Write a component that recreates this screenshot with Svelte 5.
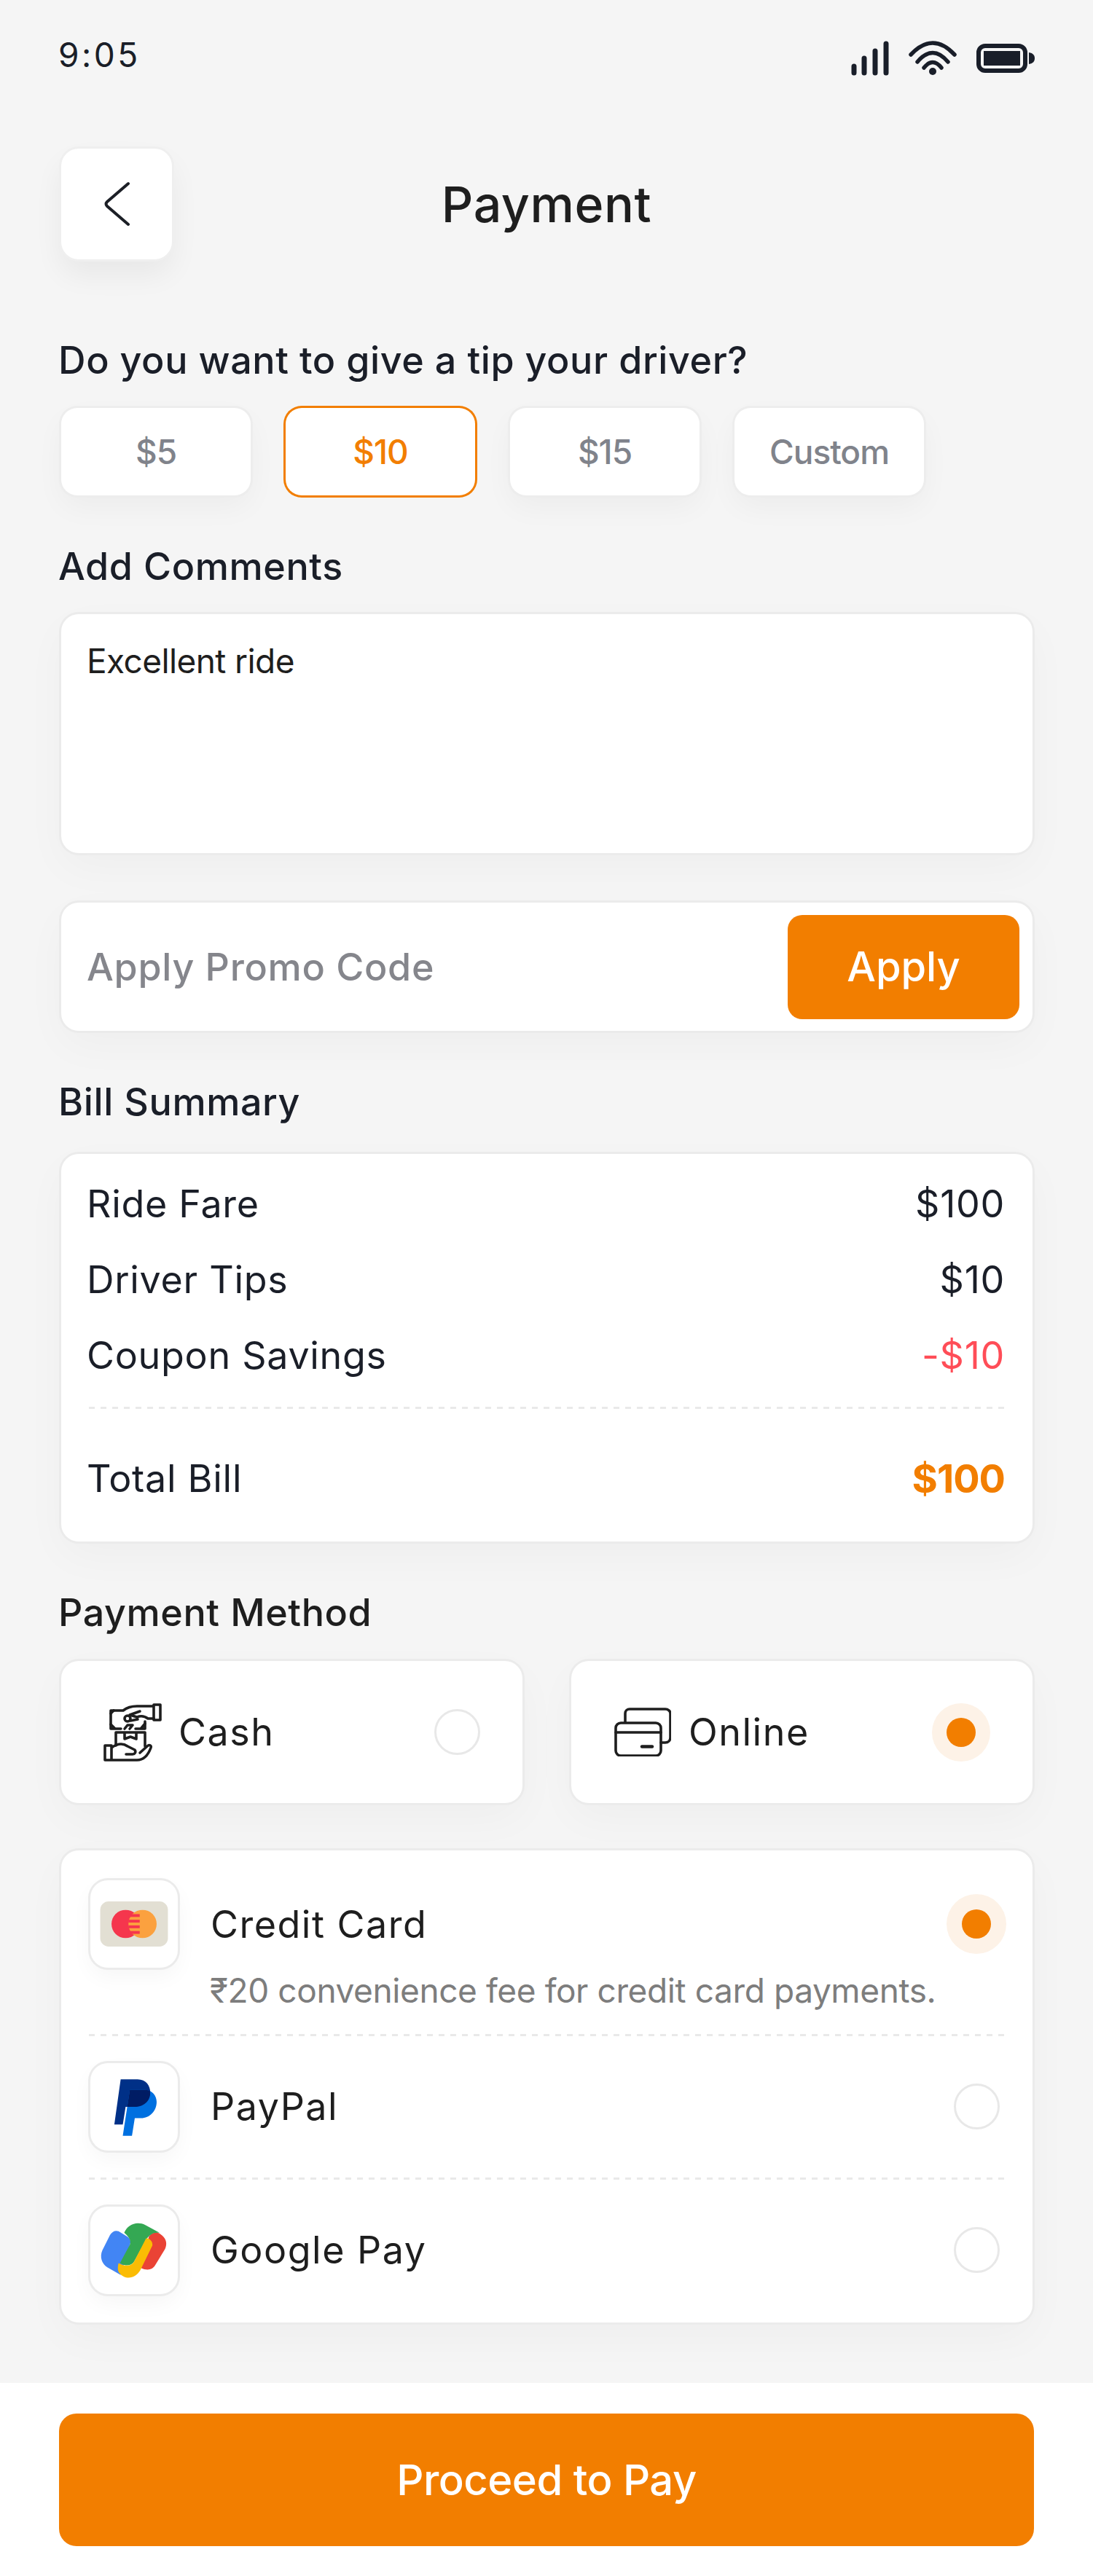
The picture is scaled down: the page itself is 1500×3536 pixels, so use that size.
<script>
  const tips = ['$5', '$10', '$15', 'Custom'];
  const bill = [
    { label: 'Ride Fare', value: '$100' },
    { label: 'Driver Tips', value: '$10' },
    { label: 'Coupon Savings', value: '-$10', negative: true }
  ];
</script>

<div class="screen">
  <div class="content">
    <div class="status">
      <span class="time">9:05</span>
      <svg class="status-icons" viewBox="1160 50 265 60" width="265" height="60" aria-hidden="true">
        <g stroke="#191e29" stroke-linecap="round" fill="none">
          <path stroke-width="7" d="M1172 91V100M1186 80V100M1201 70V100M1216 60V100" />
          <path stroke-width="5.5" d="M1250 75Q1280 43 1310 75M1259 85Q1280 60 1301 85M1268 93Q1280 78 1292 93" />
        </g>
        <circle cx="1280" cy="98" r="5" fill="#191e29" />
        <rect x="1343" y="63" width="64" height="34" rx="9" fill="none" stroke="#191e29" stroke-width="6" />
        <rect x="1350" y="70" width="50" height="20" fill="#191e29" />
        <path d="M1412 72C1418 73 1420 76 1420 80S1418 87 1412 88Z" fill="#191e29" />
      </svg>
    </div>

    <header class="topbar">
      <button class="back" aria-label="Back">
        <svg viewBox="0 0 40 64" width="40" height="64" aria-hidden="true">
          <path d="M36 4L7 29Q4 32 7 35L36 60" fill="none" stroke="#1c1f26" stroke-width="4" stroke-linecap="round" />
        </svg>
      </button>
      <h1>Payment</h1>
    </header>

    <h2 class="h-tip">Do you want to give a tip your driver?</h2>
    <div class="tips">
      {#each tips as t, i}
        <div class="tip" class:active={i === 1}>{t}</div>
      {/each}
    </div>

    <h2 class="h-comments">Add Comments</h2>
    <div class="card comment">Excellent ride</div>

    <div class="card promo">
      <span>Apply Promo Code</span>
      <button class="apply">Apply</button>
    </div>

    <h2 class="h-bill">Bill Summary</h2>
    <div class="card bill">
      {#each bill as row}
        <div class="bill-row">
          <span>{row.label}</span>
          <span class:neg={row.negative}>{row.value}</span>
        </div>
      {/each}
      <div class="dash bill-dash"></div>
      <div class="bill-row total">
        <span>Total Bill</span>
        <b>$100</b>
      </div>
    </div>

    <h2 class="h-method">Payment Method</h2>
    <div class="modes">
      <div class="card mode">
        <svg class="ic-cash" viewBox="0 0 80 80" width="80" height="80" aria-hidden="true">
          <g fill="none" stroke="#1e1e1e" stroke-width="3.6" stroke-linejoin="round" stroke-linecap="round">
            <path d="M69 2H78V23H69ZM69 4H46C38 4 32 6 27 10H10V35H24M44 35H57V25" />
            <path d="M69 21H61C57 18 51 17 46 19L36 16L50 11M10 14L14 10M10 29L15 34M52 34L57 28M37 24L47 22M29 35L33 30L40 30L36 35" />
            <circle cx="33" cy="21" r="4" />
            <path d="M17 58V40H57V59M29 40V49L37 46L45 49V40" />
            <path d="M2 58H11V78H2ZM11 61C18 56 26 54 33 59L43 64C45 67 43 70 40 70H31M11 78H46C54 78 61 72 65 61C66 58 63 56 60 59L50 68" />
          </g>
        </svg>
        <span class="mode-label">Cash</span>
        <span class="radio"></span>
      </div>
      <div class="card mode">
        <svg class="ic-online" viewBox="0 0 78 67" width="78" height="67" aria-hidden="true">
          <g fill="none" stroke="#1e1e1e" stroke-width="3.6" stroke-linecap="round">
            <path d="M15 20V8C15 4 18 2 21 2H70C74 2 77 5 77 8V41C77 45 74 48 70 48H64" />
            <rect x="2" y="21" width="62" height="45" rx="7" />
            <path d="M2 34H64" />
            <path d="M38 53.500H52" stroke-width="4.500" />
          </g>
        </svg>
        <span class="mode-label">Online</span>
        <span class="radio-on big"><i></i></span>
      </div>
    </div>

    <div class="card methods">
      <div class="method first">
        <div class="tile">
          <svg viewBox="0 0 124 124" width="120" height="120" aria-hidden="true">
            <rect x="14" y="30" width="96" height="64" rx="12" fill="#e2dfd3" />
            <circle cx="50" cy="62" r="20" fill="#f5364d" />
            <circle cx="74" cy="62" r="20" fill="#fba13f" />
            <g fill="#f5364d">
              <rect x="54" y="48" width="16" height="4" />
              <rect x="54" y="56" width="16" height="4" />
              <rect x="54" y="64" width="16" height="4" />
              <rect x="54" y="72" width="16" height="4" />
            </g>
          </svg>
        </div>
        <div class="method-main">
          <div class="method-line">
            <span>Credit Card</span>
            <span class="radio-on"><i></i></span>
          </div>
        </div>
      </div>
      <div class="note">₹20 convenience fee for credit card payments.</div>
      <div class="dash"></div>
      <div class="method">
        <div class="tile">
          <svg viewBox="0 0 124 124" width="120" height="120" aria-hidden="true">
            <defs>
              <clipPath id="pp-dark">
                <path d="M43 23H67C79 23 85 32 85 42C85 54 75 62 63 62H50L46 87H34Z" />
              </clipPath>
            </defs>
            <path d="M43 23H67C79 23 85 32 85 42C85 54 75 62 63 62H50L46 87H34Z" fill="#003087" />
            <path d="M56 38H78C88 38 94 47 94 55C94 68 84 78 72 78H63L59 103H46Z" fill="#0070e0" />
            <path d="M56 38H78C88 38 94 47 94 55C94 68 84 78 72 78H63L59 103H46Z" fill="#001c64" clip-path="url(#pp-dark)" />
          </svg>
        </div>
        <div class="method-line fill">
          <span>PayPal</span>
          <span class="radio"></span>
        </div>
      </div>
      <div class="dash"></div>
      <div class="method">
        <div class="tile">
          <svg viewBox="0 0 124 124" width="120" height="120" aria-hidden="true">
            <path d="M28 40C31 35 36 33 40 35L53 43C57 46 58 50 56 54L43 97L24 86C16 81 13 71 17 62Z" fill="#4285f4" />
            <path d="M83 42C87 37 93 35 98 38L102 41C108 46 109 53 106 60L92 83C88 90 80 91 72 87Z" fill="#ea4335" />
            <path d="M48 37C53 25 66 20 78 26L98 37C90 36 84 39 79 47L62 78C58 84 50 85 42 80L56 54C58 49 56 44 48 37Z" fill="#34a853" />
            <path d="M79 45C83 44 89 49 88 55L71 90C64 102 50 105 41 94C38 90 39 84 40 80C47 84 57 86 62 78Z" fill="#fbbc04" />
          </svg>
        </div>
        <div class="method-line fill">
          <span>Google Pay</span>
          <span class="radio"></span>
        </div>
      </div>
    </div>
  </div>

  <footer class="footer">
    <button class="proceed">Proceed to Pay</button>
  </footer>
</div>

<style>
  :global(body) {
    margin: 0;
    background: #f5f5f5;
  }
  .screen {
    width: 1500px;
    height: 3536px;
    display: flex;
    flex-direction: column;
    background: #f5f5f5;
    color: #1a1e28;
    font-family: "Inter", "Noto Sans", sans-serif;
    overflow: hidden;
  }
  .content {
    flex: 1;
    padding: 0 82px;
    display: flex;
    flex-direction: column;
  }
  .status {
    height: 124px;
    display: flex;
    justify-content: space-between;
    align-items: flex-start;
    margin-right: -7px;
  }
  .time {
    font-size: 46px;
    font-weight: 400;
    letter-spacing: 3.5px;
    line-height: 56px;
    margin-top: 47px;
    margin-left: -2px;
  }
  .status-icons {
    margin-top: 50px;
  }
  .topbar {
    margin-top: 80px;
    height: 152px;
    position: relative;
    display: flex;
    align-items: center;
    justify-content: center;
  }
  .back {
    position: absolute;
    left: 0;
    top: 0;
    margin-left: 2px;
    width: 152px;
    height: 152px;
    padding: 0;
    border: 0;
    border-radius: 24px;
    background: #fff;
    box-shadow: 0 0 0 3px #efefef, 0 20px 40px rgba(0, 0, 0, 0.06);
    display: flex;
    align-items: center;
    justify-content: center;
  }
  h1 {
    margin: 0;
    font-size: 68px;
    font-weight: 500;
    color: #1e1e1e;
    letter-spacing: 0.6px;
  }
  h2 {
    margin: 0 0 0 -2px;
    font-size: 52px;
    font-weight: 500;
    line-height: 64px;
    letter-spacing: 0.6px;
  }
  .h-tip { margin-top: 107px; }
  .h-comments { margin-top: 66px; color: #1a1e28; }
  .h-bill { margin-top: 66px; }
  .h-method { margin-top: 66px; color: #1e1e1e; }
  .tips {
    display: flex;
    gap: 46px;
    margin-top: 33px;
    margin-left: 2px;
  }
  .tip {
    width: 260px;
    height: 120px;
    box-sizing: border-box;
    background: #fff;
    border-radius: 22px;
    box-shadow: 0 0 0 3px #ededed, 0 16px 40px rgba(0, 0, 0, 0.04);
    display: flex;
    align-items: center;
    justify-content: center;
    font-size: 46px;
    font-weight: 500;
    color: #80838b;
    letter-spacing: -1px;
    margin-right: 2px;
  }
  .tip.active {
    color: #f27e00;
    box-shadow: 0 0 0 3px #f27e00;
  }
  .card {
    background: #fff;
    border-radius: 24px;
    box-shadow: 0 0 0 3px #ebebeb, 0 20px 60px rgba(0, 0, 0, 0.03);
    margin-left: 2px;
    margin-right: 1px;
  }
  .comment {
    margin-top: 33px;
    height: 328px;
    box-sizing: border-box;
    padding: 36px 35px;
    font-size: 46px;
    line-height: 56px;
    letter-spacing: -0.6px;
    color: #1e1e1e;
  }
  .promo {
    margin-top: 68px;
    height: 176px;
    padding: 18px 18px 18px 35px;
    box-sizing: border-box;
    display: flex;
    align-items: center;
    justify-content: space-between;
    font-size: 52px;
    font-weight: 500;
    letter-spacing: 0.7px;
    color: #85868c;
  }
  .apply {
    width: 318px;
    height: 143px;
    border: 0;
    border-radius: 20px;
    background: #f27e00;
    color: #fff;
    font: inherit;
    font-size: 56px;
    letter-spacing: 0;
  }
  .bill {
    margin-top: 39px;
    height: 532px;
    box-sizing: border-box;
    padding: 17px 38px 0;
    font-size: 52px;
    letter-spacing: 0.7px;
  }
  .bill-row {
    height: 104px;
    display: flex;
    align-items: center;
    justify-content: space-between;
    line-height: 52px;
    margin-left: -3px;
    margin-right: 0;
  }
  .neg { color: #ff4d57; }
  .total { margin-top: 44px; }
  .total b {
    color: #f27e00;
    font-weight: 700;
    font-size: 54px;
    letter-spacing: -1px;
  }
  .dash {
    height: 3px;
    flex: none;
    background: repeating-linear-gradient(90deg, #e9e9e9 0 8px, transparent 8px 16px);
  }
  .bill-dash { margin-top: 18px; }
  .modes {
    display: flex;
    gap: 65px;
    margin-top: 34px;
    margin-right: 1px;
  }
  .modes .card {
    margin: 0;
  }
  .mode {
    flex: 1;
    height: 195px;
    box-sizing: border-box;
    padding: 0 58px 0 58px;
    display: flex;
    align-items: center;
    margin-left: 2px !important;
  }
  .ic-online { margin-left: 1px; margin-right: 1px; }
  .mode-label {
    margin-left: 23px;
    font-size: 52px;
    letter-spacing: 1.5px;
    color: #1e1e1e;
    flex: 1;
  }
  .radio {
    width: 63px;
    height: 63px;
    box-sizing: border-box;
    border: 3px solid #e8e8e8;
    border-radius: 50%;
    background: #fff;
    display: block;
  }
  .radio-on {
    width: 82px;
    height: 82px;
    border-radius: 50%;
    background: #fdf2e7;
    display: flex;
    align-items: center;
    justify-content: center;
  }
  .radio-on i {
    width: 40px;
    height: 40px;
    border-radius: 50%;
    background: #f27e00;
  }
  .radio-on.big { width: 80px; height: 80px; }
  .methods {
    margin-top: 65px;
    height: 648px;
    box-sizing: border-box;
    padding: 37px 38px 0;
    display: flex;
    flex-direction: column;
  }
  .method {
    display: flex;
    align-items: center;
    height: 127px;
    margin: 33px 0 34px;
  }
  .method.first { margin: 0; }
  .tile {
    width: 120px;
    height: 120px;
    flex: none;
    margin-left: 2px;
    background: #fff;
    border-radius: 24px;
    box-shadow: 0 0 0 3px #ebebeb, 0 12px 30px rgba(0, 0, 0, 0.04);
  }
  .tile svg { display: block; }
  .method-main { flex: 1; margin-right: -2px; }
  .method-line {
    margin-left: 45px;
    display: flex;
    align-items: center;
    justify-content: space-between;
    font-size: 52px;
    letter-spacing: 1.5px;
    color: #1e1e1e;
  }
  .method-main .method-line { position: relative; top: 1px; }
  .method-main .method-line .radio-on { position: relative; top: -1px; }
  .method-line.fill { flex: 1; }
  .method-line .radio { margin-right: 7px; }
  .note {
    margin-left: 166px;
    margin-top: 2px;
    font-size: 46px;
    line-height: 52px;
    letter-spacing: -0.4px;
    color: #7d7d7d;
    margin-bottom: 34px;
  }
  .footer {
    height: 265px;
    box-sizing: border-box;
    background: #fff;
    padding: 42px 81px 0;
  }
  .proceed {
    width: 100%;
    height: 182px;
    border: 0;
    border-radius: 24px;
    background: #f27e00;
    color: #fff;
    font: inherit;
    font-size: 58px;
    font-weight: 500;
    letter-spacing: -0.5px;
  }
</style>
